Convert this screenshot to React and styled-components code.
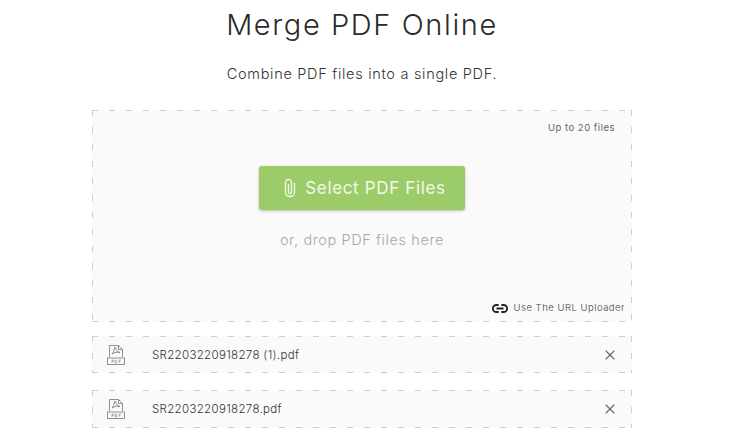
import React from "react";
import styled, { createGlobalStyle, css } from "styled-components";
import { X } from "lucide-react";

const GlobalStyle = createGlobalStyle`
  html, body {
    margin: 0;
    padding: 0;
    height: 435px;
    overflow: hidden;
    background: #fff;
    font-family: "Inter", "Liberation Sans", sans-serif;
  }
`;

const dashed = css`
  background-color: #fafafa;
  background-image:
    repeating-linear-gradient(90deg, #cfcfcf 0 6px, transparent 6px 17px),
    repeating-linear-gradient(90deg, #cfcfcf 0 6px, transparent 6px 17px),
    repeating-linear-gradient(180deg, #cfcfcf 0 6px, transparent 6px 17px),
    repeating-linear-gradient(180deg, #cfcfcf 0 6px, transparent 6px 17px);
  background-size: 100% 1px, 100% 1px, 1px 100%, 1px 100%;
  background-position: 0 0, 0 100%, 0 0, 100% 0;
  background-repeat: no-repeat;
`;

const Page = styled.div`
  width: 724px;
  height: 435px;
  overflow: hidden;
  display: flex;
  flex-direction: column;
  align-items: center;
`;

const Title = styled.h1`
  margin: 6px 0 0;
  height: 38px;
  line-height: 38px;
  font-size: 29px;
  font-weight: 300;
  letter-spacing: 1.6px;
  color: #2b2b2b;
`;

const Subtitle = styled.p`
  margin: 19px 0 0;
  height: 22px;
  line-height: 22px;
  font-size: 14.5px;
  font-weight: 300;
  letter-spacing: 0.7px;
  color: #333;
`;

const DropZone = styled.section`
  ${dashed}
  box-sizing: border-box;
  width: 540px;
  height: 212px;
  margin-top: 25px;
  padding: 12px 7px 8px 16px;
  display: flex;
  flex-direction: column;
  align-items: center;
`;

const Limit = styled.div`
  align-self: flex-end;
  padding-right: 10px;
  font-size: 9.5px;
  line-height: 12px;
  letter-spacing: 0.5px;
  color: #666;
`;

const SelectButton = styled.button`
  width: 206px;
  height: 44px;
  margin: 32px 0 0 -9px;
  padding: 0 0 0 6px;
  border: 0;
  border-radius: 3px;
  background: #9ccc69;
  box-shadow: 0 1px 3px rgba(0, 0, 0, 0.25);
  color: #f3f8e6;
  font: 400 17px "Inter", "Liberation Sans", sans-serif;
  letter-spacing: 0.65px;
  display: flex;
  align-items: center;
  justify-content: center;
  gap: 9px;
`;

const DropHint = styled.div`
  margin: 20px 0 0 -9px;
  font-size: 14.5px;
  font-weight: 300;
  line-height: 20px;
  letter-spacing: 0.6px;
  color: #a8a8a8;
`;

const UrlLink = styled.div`
  margin-top: auto;
  align-self: flex-end;
  display: flex;
  align-items: center;
  gap: 6px;
  font-size: 9.5px;
  font-weight: 300;
  line-height: 12px;
  letter-spacing: 0.5px;
  color: #444;
`;

const FileRow = styled.div`
  ${dashed}
  box-sizing: border-box;
  flex: none;
  width: 540px;
  height: ${(p) => p.$h}px;
  margin-top: ${(p) => p.$top}px;
  padding: 0 14px 0 15px;
  display: flex;
  align-items: center;
`;

const FileName = styled.span`
  margin-left: 27px;
  flex: 1;
  font-size: 11.5px;
  font-weight: 300;
  letter-spacing: 0.33px;
  color: #333;
`;

const Remove = styled.span`
  display: flex;
  color: #666;
`;

const ClipIcon = () => (
  <svg width="12" height="20" viewBox="0 0 12 20" fill="none" stroke="currentColor" strokeWidth="1.3">
    <path d="M4.500 6v8a1.500 1.500 0 0 0 3 0V4.500a3 3 0 0 0-6 0V14a4.500 4.500 0 0 0 9 0V5" />
  </svg>
);

const PdfIcon = () => (
  <svg width="18" height="20" viewBox="0 0 18 20" fill="none" stroke="#777" strokeWidth="0.8">
    <path d="M2.500 12V.5h9l4 4V12M11.500.5v4h4" />
    <path d="M8 2c-.8 0 0 3-3 7 3-2 5-2 8-1.500-3-.8-4.500-3-4.500-5.500" />
    <rect x=".5" y="13" width="17" height="6.500" />
    <path d="M5 18v-3h1.500v1.500H5M8 15v3h1.500v-3H8M12 18v-3h2M12 16.500h1.500" strokeWidth="0.5" />
  </svg>
);

const LinkIcon = () => (
  <svg width="16" height="11" viewBox="0 0 18 12" fill="none" stroke="#222" strokeWidth="2.100">
    <path d="M7.500 2H5a4 4 0 0 0 0 8h2.500M10.500 2H13a4 4 0 0 1 0 8h-2.500M5 6h8" />
  </svg>
);

const files = [
  { name: "SR2203220918278 (1).pdf", top: 14, h: 37 },
  { name: "SR2203220918278.pdf", top: 17, h: 38 },
];

export default function App() {
  return (
    <Page>
      <GlobalStyle />
      <Title>Merge PDF Online</Title>
      <Subtitle>Combine PDF files into a single PDF.</Subtitle>
      <DropZone>
        <Limit>Up to 20 files</Limit>
        <SelectButton>
          <ClipIcon />
          Select PDF Files
        </SelectButton>
        <DropHint>or, drop PDF files here</DropHint>
        <UrlLink>
          <LinkIcon />
          Use The URL Uploader
        </UrlLink>
      </DropZone>
      {files.map((f) => (
        <FileRow key={f.name} $top={f.top} $h={f.h}>
          <PdfIcon />
          <FileName>{f.name}</FileName>
          <Remove>
            <X size={16} strokeWidth={1.6} />
          </Remove>
        </FileRow>
      ))}
    </Page>
  );
}
